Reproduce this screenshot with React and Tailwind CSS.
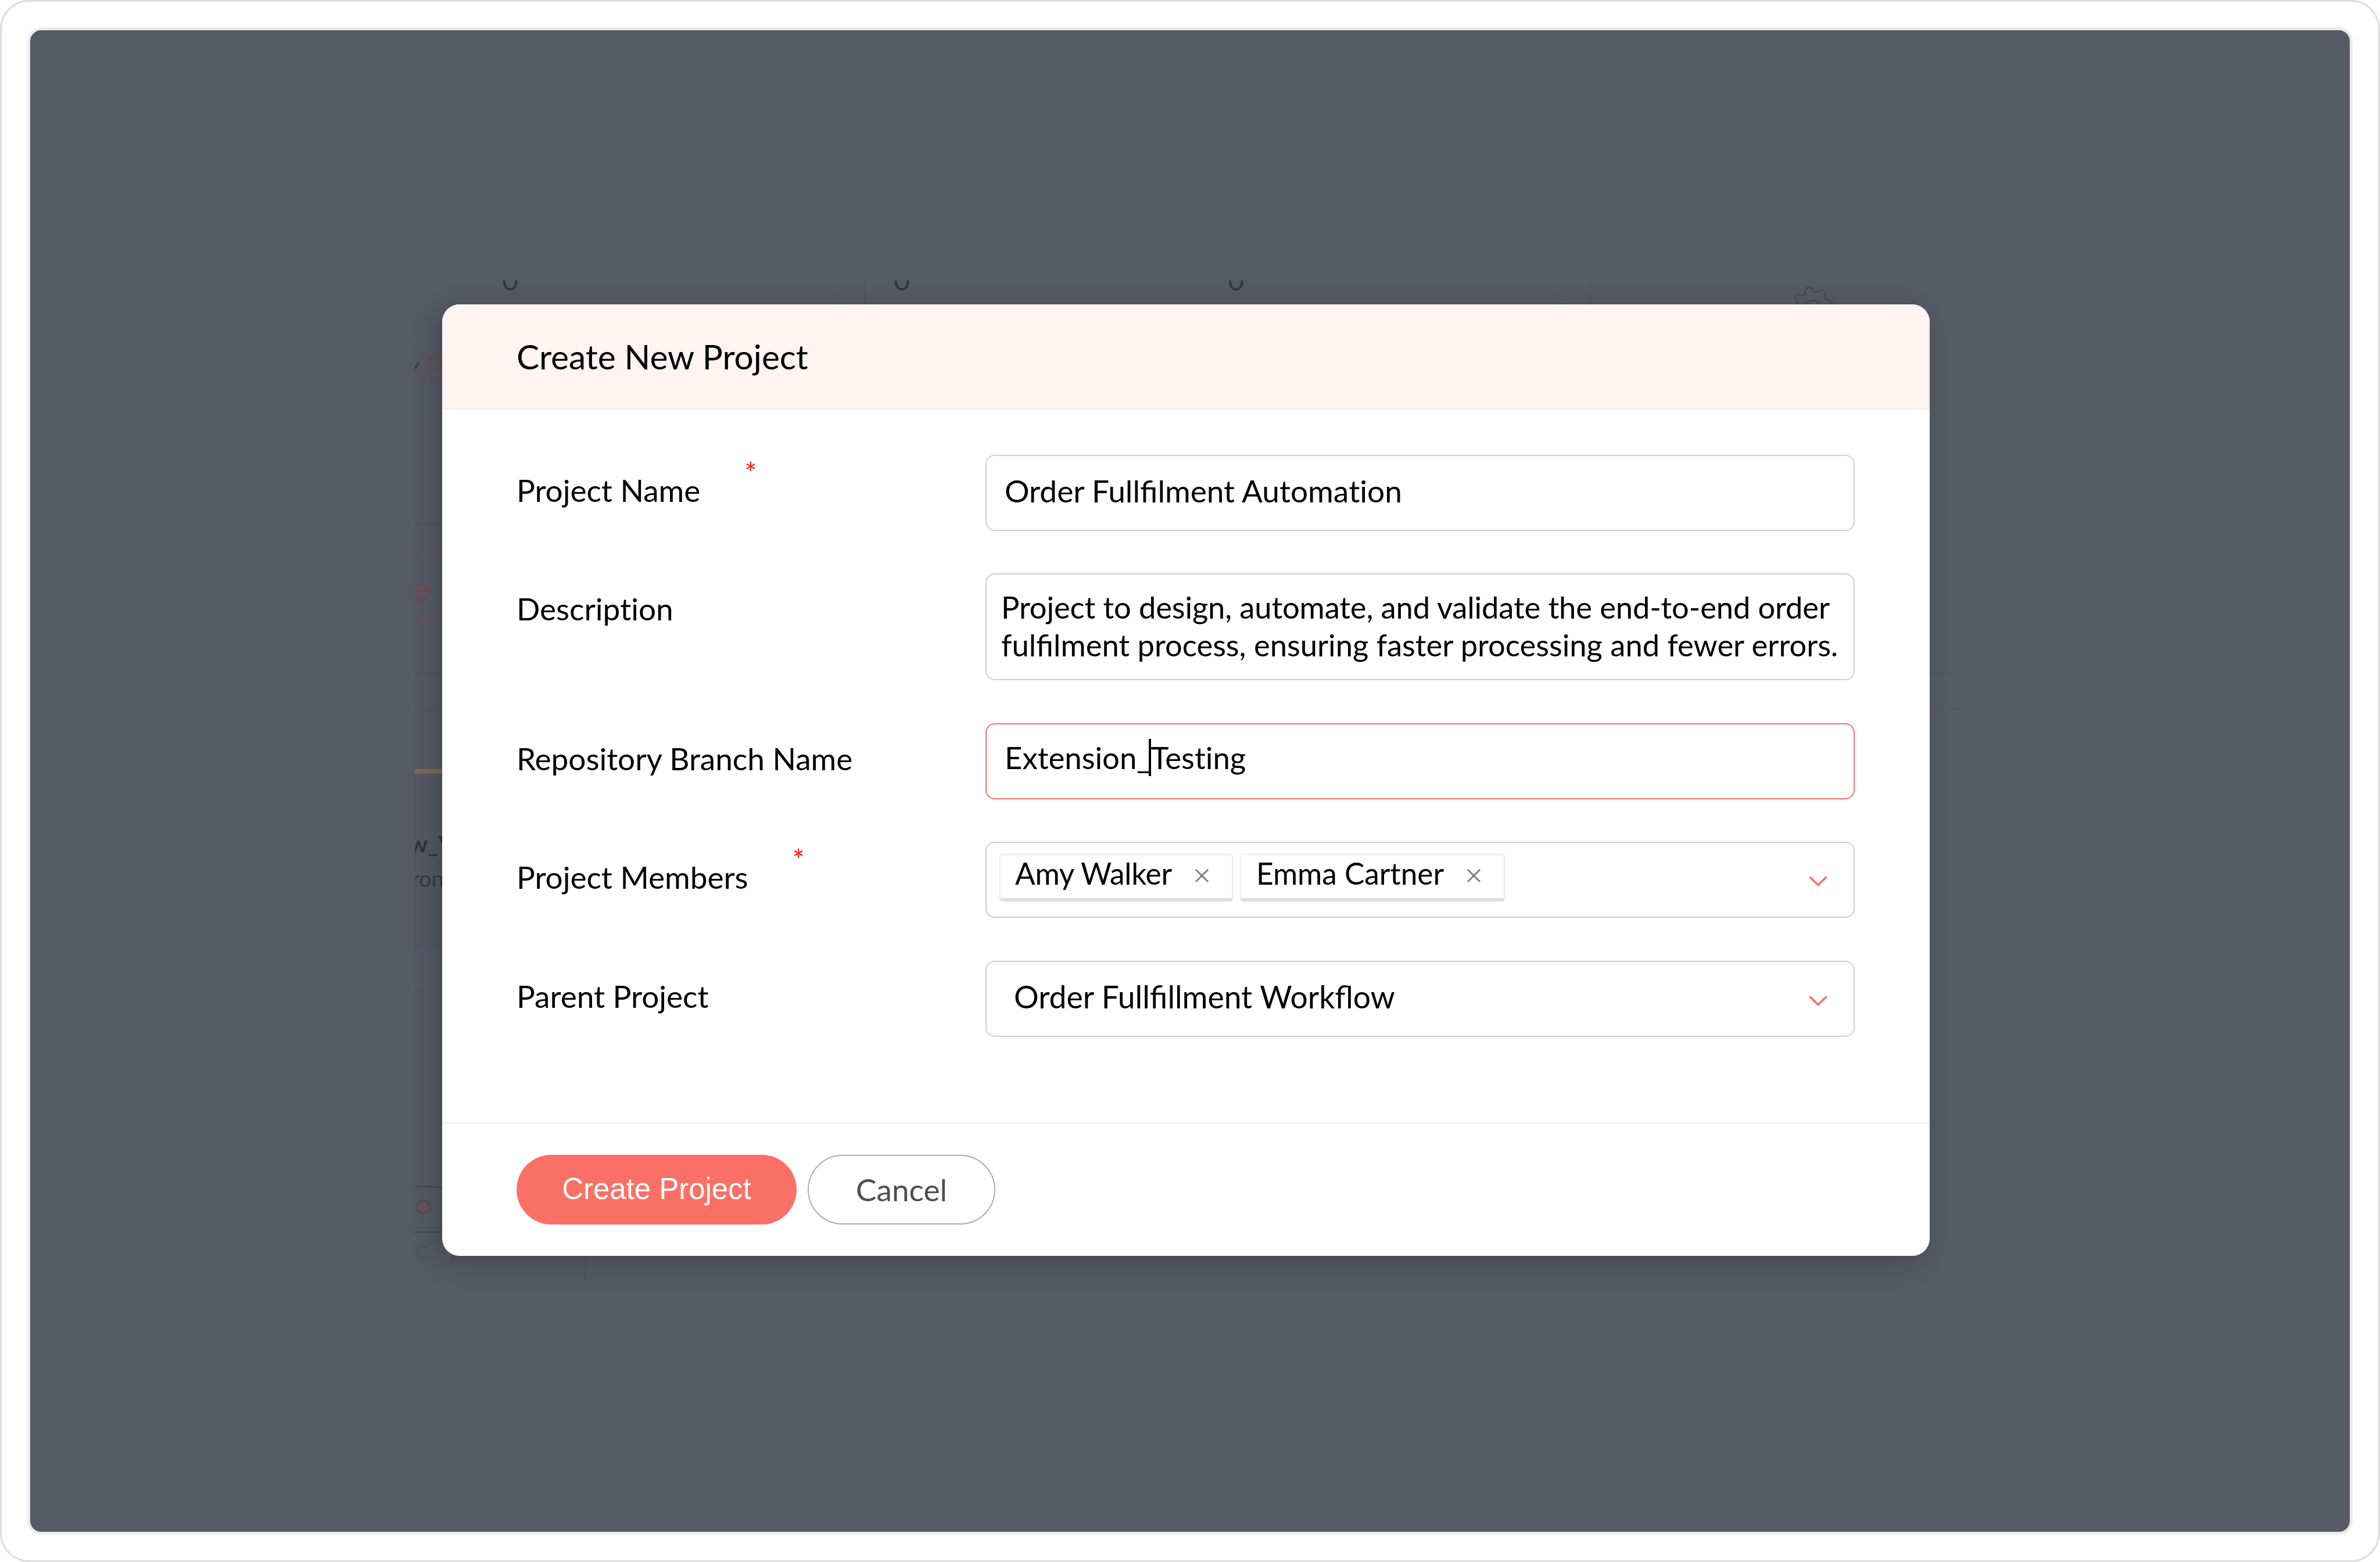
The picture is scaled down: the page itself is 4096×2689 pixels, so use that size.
import React from "react";

function Chevron() {
  return (
    <svg className="h-[20px] w-[34px] shrink-0" viewBox="0 0 34 20" fill="none">
      <path d="M2.5 2.5 L17 16.5 L31.5 2.5" stroke="#fb7066" strokeWidth="3.6" />
    </svg>
  );
}

/* Keeps "t" and "i" as separate letters */
function Plain({ children }) {
  return <span className="[font-variant-ligatures:none]">{children}</span>;
}

function Row({ label, starred, children }) {
  return (
    <div className="flex w-full items-start">
      <div className="flex w-[807px] shrink-0 items-start gap-[76px]">
        <span className="whitespace-nowrap text-[53.1px] leading-[121px] text-black">{label}</span>
        {starred && <span className="pt-[6px] text-[50px] leading-[50px] text-[#ff1f14]">*</span>}
      </div>
      {children}
    </div>
  );
}

function Chip({ name, className }) {
  return (
    <div
      className={`flex h-[82px] items-start justify-between rounded-[5px] border-2 border-b-[6px] border-[#ebebeb] border-b-[#e0e0e0] bg-white pl-[25px] pr-[39px] shadow-[0_1px_2px_rgba(0,0,0,0.06)] ${className}`}
    >
      <span className="whitespace-nowrap text-[51.3px] leading-[63px]">{name}</span>
      <svg className="mt-[23px] h-[25px] w-[25px]" viewBox="0 0 26 26" fill="none">
        <path d="M2 2 L24 24 M24 2 L2 24" stroke="#7d7d7d" strokeWidth="3" />
      </svg>
    </div>
  );
}

const FIELD = "w-[1496px] shrink-0 rounded-[16px] border-2 bg-white";
const FAINT = "h-[2px] w-full bg-[#50545e]";
const REDDISH = "h-[2px] w-full bg-[#67515a]";

/* Slivers of the page that stay visible behind the dimmed overlay */
function Backdrop() {
  return (
    <div className="absolute left-[714px] top-[483px] flex h-[1721px] w-[2668px] flex-col overflow-hidden">
      <div className="flex h-[42px] shrink-0 items-start text-[49px] leading-[52px] text-[#323742]">
        <div className="flex w-[722px] shrink-0 justify-start border-r-2 border-[#51555f] pl-[150px]">
          <span className="-mt-[28px] h-[70px]">0</span>
        </div>
        <div className="ml-[51px] flex w-[1199px] shrink-0 border-x-2 border-[#51555f] pl-[49px]">
          <span className="-mt-[28px] h-[70px] w-[575px]">0</span>
          <span className="-mt-[28px] h-[70px]">0</span>
        </div>
        <div className="h-[42px] w-[51px] shrink-0 border-r-2 border-dashed border-[#4e525c]" />
        <svg className="ml-[350px] mt-[9px] h-[33px] w-[69px] shrink-0" viewBox="350 145 240 115" fill="none" stroke="#434853" strokeWidth="7">
          <path d="M370 260 Q374 246 366 236 Q356 216 366 202 Q376 192 392 200 Q404 206 412 196 Q420 192 420 176 Q426 156 443 154 Q458 154 466 172 Q472 184 488 184 Q500 170 514 169 Q536 172 539 192 Q534 210 541 222 Q556 232 566 233 Q582 240 580 262" />
          <path d="M424 262 Q438 232 468 232 Q492 234 502 262" />
        </svg>
      </div>

      <div className="flex grow justify-between">
        <div className="flex w-[60px] flex-col">
          <svg className="mt-[84px] h-[43px] w-[60px] shrink-0" viewBox="825 704 69.3 50" fill="none" stroke="#74494f" strokeWidth="3.4">
            <path d="M825 734 L832 722" stroke="#343944" />
            <path d="M862 708.5 H876" />
            <path d="M848 714.8 H894" strokeWidth="4" />
            <path d="M852 716 L855.5 747 Q856 750.5 860 750.5 H890" />
            <path d="M865 723.5 L866 742 M875.5 723.5 L875 742" strokeWidth="2.6" />
          </svg>
          <div className={`mt-[249px] ${FAINT}`} />
          <div className={`mt-[55px] ${REDDISH}`} />
          <div className="flex h-[110px] w-[25px] justify-end pt-[28px] font-['Liberation_Sans',sans-serif] text-[55px] leading-[54px] text-[#7a474f]">
            <span>e</span>
          </div>
          <div className={REDDISH} />
          <div className={`mt-[87px] ${FAINT}`} />
          <div className={`mt-[58px] ${FAINT}`} />
          <div className="mt-[103px] flex h-[308px] w-full flex-col items-start border-b-2 border-t-[8px] border-b-[#57535c] border-t-[#826a56] bg-[#575962]">
            <span className="-ml-[10px] mt-[98px] whitespace-nowrap text-[40px] font-bold leading-[46px] text-[#2f343f]">w_V</span>
            <span className="-ml-[6px] mt-[14px] whitespace-nowrap text-[38px] leading-[44px] text-[#353a45]">ron</span>
          </div>
          <div className="mt-[70px] w-full border-t-2 border-dashed border-[#50545e]" />
          <div className="-ml-[40px] mt-[338px] flex h-[72px] w-[92px] shrink-0 items-center rounded-[14px] border-2 border-[#434751] border-b-[#4f535d] pl-[41px]">
            <span className="h-[24px] w-[24px] shrink-0 rounded-full border-2 border-[#4b4c55] bg-[#66545a]" />
          </div>
          <div className="-ml-[40px] mt-[6px] flex h-[66px] w-[106px] shrink-0 items-center rounded-[14px] border-2 border-b-0 border-[#444852] border-r-[#4c505a] pl-[41px] pt-[4px]">
            <span className="h-[24px] w-[24px] shrink-0 rounded-full border-2 border-[#4b4f59] border-r-transparent" />
          </div>
        </div>
        <div className="flex grow flex-col justify-end pl-[233px]">
          <div className="h-[76px] border-l-2 border-dashed border-[#4b4f59]" />
        </div>
        <div className="flex w-[62px] flex-col pt-[634px]">
          <div className="w-full border-t-2 border-dashed border-[#4e525d]" />
          <div className="mt-[58px] h-[2px] w-full bg-[#52565f]" />
        </div>
      </div>
    </div>
  );
}

export default function App() {
  return (
    <div className="h-[2689px] w-[4096px] overflow-hidden bg-white font-['Lato',sans-serif]">
      <div className="h-full w-full rounded-[50px] border-[3px] border-[#dcdcdc] bg-white p-[44px]">
        <div className="flex h-full w-full items-start rounded-[24px] border-[5px] border-[#ececec] bg-[#565a65] pl-[709px] pt-[472px]">
          <Backdrop />

          <div className="relative flex h-[1638px] w-[2560px] shrink-0 flex-col rounded-[30px] bg-white shadow-[-12px_12px_48px_rgba(0,0,0,0.2)]">
            <header className="flex h-[181px] shrink-0 items-center rounded-t-[30px] border-b-2 border-[#f0f0f1] bg-[#fff4f2] pb-[2px] pl-[128px]">
              <h1 className="whitespace-nowrap text-[58.6px] leading-[70px] text-black">Create New Project</h1>
            </header>

            <main className="flex h-[1227px] shrink-0 flex-col gap-[73.4px] pl-[128px] pt-[78px] text-black">
              <Row label="Project Name" starred>
                <div className={`${FIELD} h-[131px] border-[#cfcfcf] pl-[31px] text-[53.2px] leading-[118px]`}>
                  Order Fullfilment Automa<Plain>tion</Plain>
                </div>
              </Row>

              <Row label={<>Descrip<Plain>tion</Plain></>}>
                <div className={`${FIELD} h-[184px] whitespace-nowrap border-[#cfcfcf] pl-[25px] pt-[24px] text-[52.5px] leading-[64.4px]`}>
                  <span className="tracking-[-0.13px]">Project to design, automate, and validate the end-to-end order</span>
                  <br />
                  fulfilment process, ensuring faster processing and fewer errors.
                </div>
              </Row>

              <Row label="Repository Branch Name">
                <div className={`${FIELD} flex h-[131px] items-start border-[#fa7068] pl-[31px] text-[52.7px] leading-[114px]`}>
                  <span>Extension_</span>
                  <span className="-ml-[4px] mt-[25px] h-[64px] w-[4px] bg-black" />
                  <span>
                    Tes<Plain>ting</Plain>
                  </span>
                </div>
              </Row>

              <Row label="Project Members" starred>
                <div className={`${FIELD} flex h-[131px] items-start justify-between border-[#cfcfcf] pl-[22px] pr-[44px]`}>
                  <div className="flex gap-[13px] pt-[19px]">
                    <Chip name="Amy Walker" className="w-[402px] tracking-[-0.2px]" />
                    <Chip name="Emma Cartner" className="w-[455px]" />
                  </div>
                  <div className="pt-[56px]">
                    <Chevron />
                  </div>
                </div>
              </Row>

              <Row label="Parent Project">
                <div className={`${FIELD} flex h-[131px] items-start justify-between border-[#cfcfcf] pl-[47px] pr-[44px]`}>
                  <span className="text-[53.4px] leading-[118px]">Order Fullfillment Workflow</span>
                  <div className="pt-[57px]">
                    <Chevron />
                  </div>
                </div>
              </Row>
            </main>

            <footer className="flex grow items-start gap-[19px] border-t-2 border-[#eeeeee] pl-[128px] pt-[54px]">
              <button className="flex h-[120px] w-[482px] items-center justify-center rounded-full bg-[#fa7066] pb-[3px] font-['Liberation_Sans',Arial,sans-serif] text-[50.9px] leading-[60px] text-white">
                Create Project
              </button>
              <button className="flex h-[120px] w-[323px] items-center justify-center rounded-full border-2 border-[#adadad] bg-white text-[53.1px] leading-[64px] text-[#4f4f4f]">
                Cancel
              </button>
            </footer>
          </div>
        </div>
      </div>
    </div>
  );
}
